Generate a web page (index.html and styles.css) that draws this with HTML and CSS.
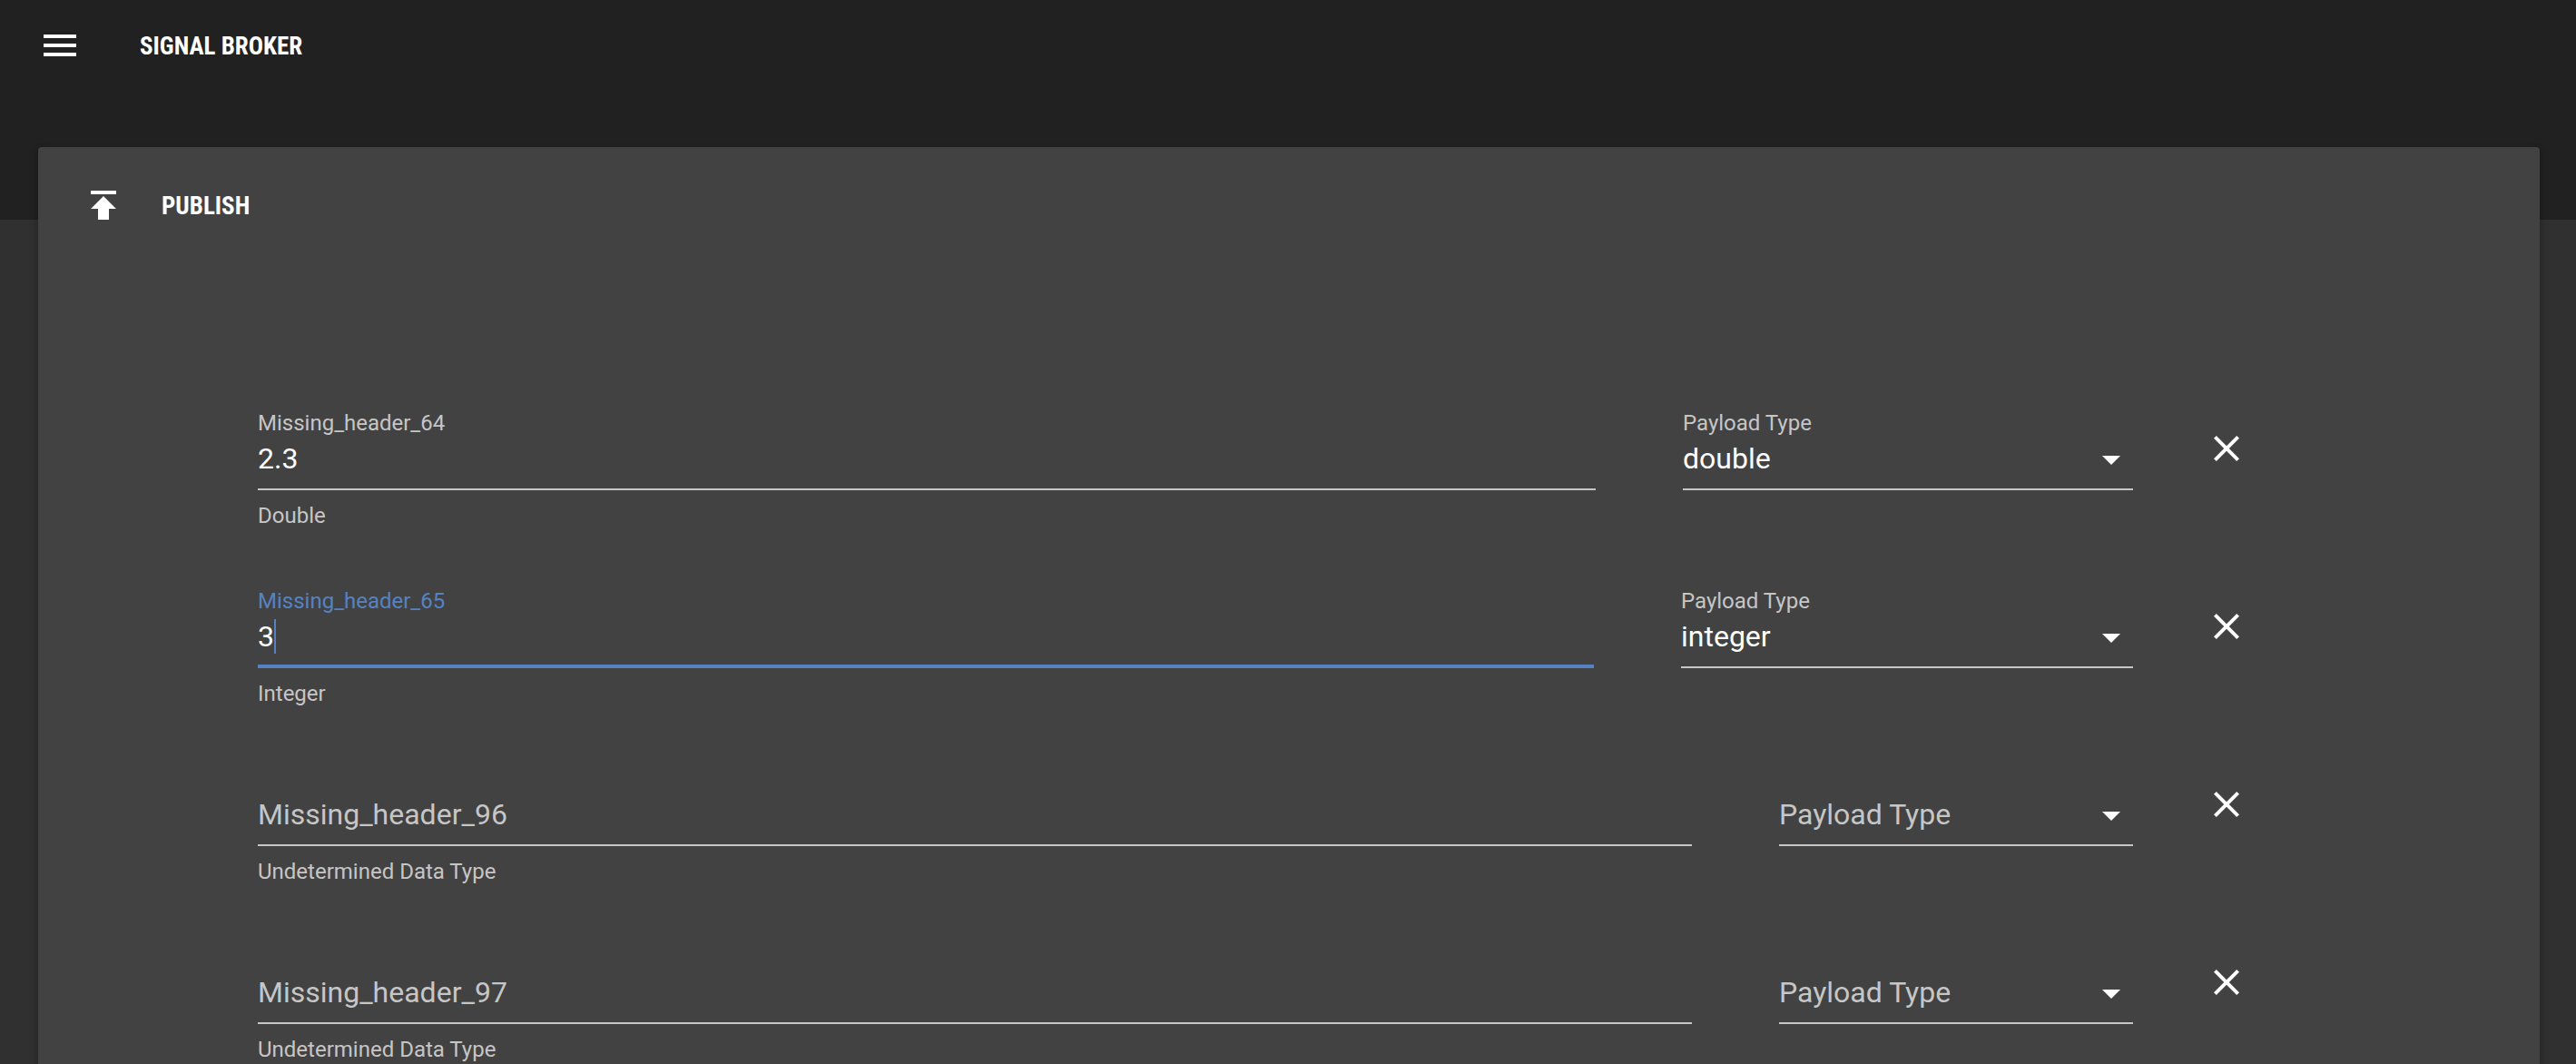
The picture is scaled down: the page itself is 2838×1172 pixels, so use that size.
FILE: index.html
```html
<!DOCTYPE html>
<html lang="en">
<head>
<meta charset="utf-8">
<title>Signal Broker</title>
<link rel="stylesheet" href="styles.css">
</head>
<body>
<header class="banner">
  <button class="icon-button" type="button" aria-label="Menu">
    <svg viewBox="0 0 24 24"><path d="M3 18h18v-2H3v2zm0-5h18v-2H3v2zm0-7v2h18V6H3z"/></svg>
  </button>
  <h1 class="title">SIGNAL BROKER</h1>
</header>
<main class="card">
  <div class="card-head">
    <svg class="card-icon" viewBox="0 0 24 24"><path d="M5 4v2h14V4H5zm0 10h4v6h6v-6h4l-7-7-7 7z"/></svg>
    <h2 class="title">PUBLISH</h2>
  </div>
  <form class="signals">
    <div class="row">
      <div class="field field-value">
        <label for="value-64">Missing_header_64</label>
        <input id="value-64" type="text" value="2.3">
        <p class="hint">Double</p>
      </div>
      <div class="field field-type">
        <label for="type-64">Payload Type</label>
        <select id="type-64"><option>double</option><option>integer</option></select>
        <svg class="arrow" viewBox="0 0 24 24"><path d="M7 10l5 5 5-5z"/></svg>
      </div>
      <button class="icon-button remove" type="button" aria-label="Remove Missing_header_64">
        <svg viewBox="0 0 24 24"><path d="M19 6.41L17.59 5 12 10.59 6.41 5 5 6.41 10.59 12 5 17.59 6.41 19 12 13.41 17.59 19 19 17.59 13.41 12z"/></svg>
      </button>
    </div>
    <div class="row">
      <div class="field field-value active">
        <label for="value-65">Missing_header_65</label>
        <input id="value-65" type="text" value="3">
        <span class="caret"></span>
        <p class="hint">Integer</p>
      </div>
      <div class="field field-type integer">
        <label for="type-65">Payload Type</label>
        <select id="type-65"><option>integer</option><option>double</option></select>
        <svg class="arrow" viewBox="0 0 24 24"><path d="M7 10l5 5 5-5z"/></svg>
      </div>
      <button class="icon-button remove" type="button" aria-label="Remove Missing_header_65">
        <svg viewBox="0 0 24 24"><path d="M19 6.41L17.59 5 12 10.59 6.41 5 5 6.41 10.59 12 5 17.59 6.41 19 12 13.41 17.59 19 19 17.59 13.41 12z"/></svg>
      </button>
    </div>
    <div class="row">
      <div class="field field-value empty">
        <label for="value-96">Missing_header_96</label>
        <input id="value-96" type="text">
        <p class="hint">Undetermined Data Type</p>
      </div>
      <div class="field field-type empty">
        <label for="type-96">Payload Type</label>
        <select id="type-96"><option value=""></option></select>
        <svg class="arrow" viewBox="0 0 24 24"><path d="M7 10l5 5 5-5z"/></svg>
      </div>
      <button class="icon-button remove" type="button" aria-label="Remove Missing_header_96">
        <svg viewBox="0 0 24 24"><path d="M19 6.41L17.59 5 12 10.59 6.41 5 5 6.41 10.59 12 5 17.59 6.41 19 12 13.41 17.59 19 19 17.59 13.41 12z"/></svg>
      </button>
    </div>
    <div class="row">
      <div class="field field-value empty">
        <label for="value-97">Missing_header_97</label>
        <input id="value-97" type="text">
        <p class="hint">Undetermined Data Type</p>
      </div>
      <div class="field field-type empty">
        <label for="type-97">Payload Type</label>
        <select id="type-97"><option value=""></option></select>
        <svg class="arrow" viewBox="0 0 24 24"><path d="M7 10l5 5 5-5z"/></svg>
      </div>
      <button class="icon-button remove" type="button" aria-label="Remove Missing_header_97">
        <svg viewBox="0 0 24 24"><path d="M19 6.41L17.59 5 12 10.59 6.41 5 5 6.41 10.59 12 5 17.59 6.41 19 12 13.41 17.59 19 19 17.59 13.41 12z"/></svg>
      </button>
    </div>
  </form>
</main>
</body>
</html>
```
FILE: styles.css
```css
* {
  box-sizing: border-box;
}

body {
  margin: 0;
  min-height: 100vh;
  background: #303030 linear-gradient(#212121, #212121) no-repeat 0 0 / 100% 242px;
  color: #fff;
  font-family: Roboto, "Liberation Sans", sans-serif;
}

svg {
  display: block;
  fill: currentColor;
}

.banner {
  display: flex;
  align-items: center;
  gap: 64px;
  height: 100px;
  padding: 0 42px;
}

.icon-button {
  width: 48px;
  height: 48px;
  padding: 0;
  border: 0;
  background: none;
  color: #fff;
}

.title {
  margin: 0;
  padding-top: 2px;
  font-family: "Roboto Condensed", "Liberation Sans Narrow", "Liberation Sans", sans-serif;
  font-size: 27px;
  font-weight: 700;
  line-height: 40px;
}

.card {
  margin: 62px 40px 0 42px;
  padding: 40px 321px 64px 242px;
  border-radius: 4px;
  background: #424242;
  box-shadow: 0 2px 6px rgba(0, 0, 0, 0.2), 0 4px 12px rgba(0, 0, 0, 0.14);
}

.card-head {
  display: flex;
  align-items: center;
  gap: 40px;
  height: 48px;
  margin-left: -194px;
}

.card-icon {
  width: 48px;
  height: 48px;
}

.signals {
  display: flex;
  flex-direction: column;
  gap: 66px;
  padding-top: 202px;
}

.row {
  display: flex;
  align-items: flex-start;
}

.field {
  position: relative;
  display: grid;
  grid-template-rows: 28px 60px;
  grid-template-columns: minmax(0, 1fr);
}

.field-value {
  flex: 1;
  margin-right: 96px;
}

.field-type {
  flex: 0 0 496px;
  margin-right: 79px;
}

.field-type.integer {
  flex-basis: 498px;
}

.field-type.empty {
  flex-basis: 390px;
}

.field label,
.hint {
  margin: 0;
  color: #c6c6c6;
  font-size: 24px;
  line-height: 28px;
}

.field input,
.field select {
  grid-area: 2 / 1;
  width: 100%;
  height: 60px;
  margin: 0;
  padding: 6px 0 14px;
  border: 0;
  border-bottom: 2px solid #c6c6c6;
  border-radius: 0;
  outline: 0;
  appearance: none;
  background: none;
  color: #fff;
  font: 32px/38px Roboto, "Liberation Sans", sans-serif;
}

.field.empty label {
  grid-area: 2 / 1;
  padding-top: 6px;
  font-size: 32px;
  line-height: 38px;
  pointer-events: none;
}

.hint {
  grid-row: 3;
  margin-top: 14px;
}

.field.active label {
  color: #5682c3;
}

.field.active input {
  padding-bottom: 12px;
  border-bottom: 4px solid #5682c3;
  caret-color: transparent;
}

.caret {
  position: absolute;
  top: 34px;
  left: 18px;
  width: 2px;
  height: 38px;
  background: #5682c3;
}

.arrow {
  position: absolute;
  top: 30px;
  right: 0;
  width: 48px;
  height: 48px;
  pointer-events: none;
}

.remove {
  margin-top: 18px;
}
```
